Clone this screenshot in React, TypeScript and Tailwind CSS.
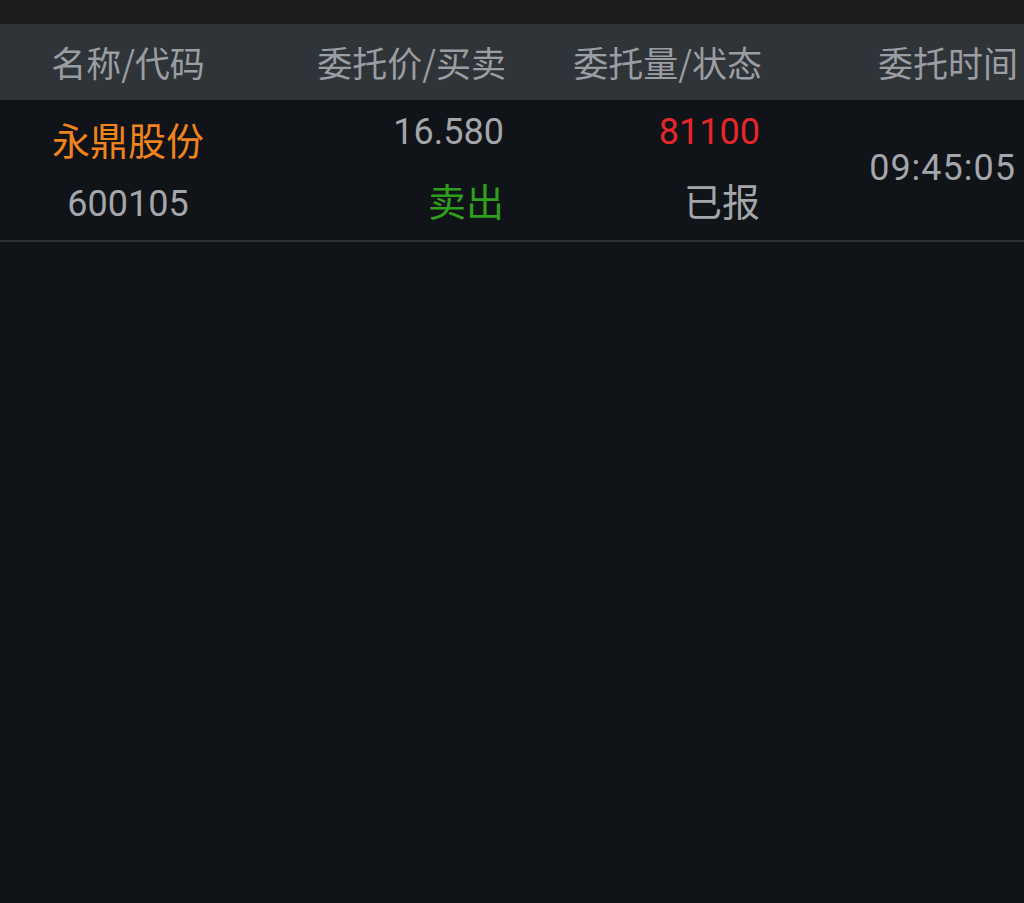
import * as React from "react";

type OrderRow = {
    name: string;
    code: string;
    price: string;
    side: string;
    volume: string;
    status: string;
    time: string;
};

const orders: OrderRow[] = [
    {
        name: "永鼎股份",
        code: "600105",
        price: "16.580",
        side: "卖出",
        volume: "81100",
        status: "已报",
        time: "09:45:05",
    },
];

const cjk = "font-['Noto_Sans_CJK_SC',_'Noto_Sans',_sans-serif]";
const num = "font-['Roboto',_'Noto_Sans_CJK_SC',_sans-serif]";

const RenderHeader = (): React.ReactElement => (
    <div className={`grid grid-cols-4 h-[76px] bg-[#2f3439] text-[35px] text-[#9a9da1] ${cjk}`}>
        <div className="flex items-center justify-center">名称/代码</div>
        <div className="flex items-center justify-end pr-[6px]">委托价/买卖</div>
        <div className="flex items-center justify-end pr-[6px]">委托量/状态</div>
        <div className="flex items-center justify-end pr-[6px]">委托时间</div>
    </div>
);

const RenderRow = (props: { row: OrderRow }): React.ReactElement => (
    <div className="grid grid-cols-4 h-[142px] border-b-2 border-[#2a2f34]">
        <div className="flex flex-col items-center pt-[19px] gap-[25px]">
            <span className={`h-[40px] leading-[40px] text-[38px] text-[#f0841c] ${cjk}`}>{props.row.name}</span>
            <span className={`h-[40px] leading-[40px] text-[36px] text-[#a3a6aa] ${num}`}>{props.row.code}</span>
        </div>
        <div className="flex flex-col items-end pr-[8px] pt-[12px] gap-[28px]">
            <span className={`h-[40px] leading-[40px] text-[36px] text-[#a3a6aa] ${num}`}>{props.row.price}</span>
            <span className={`h-[40px] leading-[40px] text-[38px] text-[#2f9e1c] ${cjk}`}>{props.row.side}</span>
        </div>
        <div className="flex flex-col items-end pr-[8px] pt-[12px] gap-[28px]">
            <span className={`h-[40px] leading-[40px] text-[36px] text-[#e5262a] ${num}`}>{props.row.volume}</span>
            <span className={`h-[40px] leading-[40px] text-[38px] text-[#a3a6aa] ${cjk}`}>{props.row.status}</span>
        </div>
        <div className="flex items-center justify-end pr-[8px] pb-[4px]">
            <span className={`text-[36px] tracking-[1px] text-[#a3a6aa] ${num}`}>{props.row.time}</span>
        </div>
    </div>
);

export default function App(): React.ReactElement {
    return (
        <div className="w-[1024px] h-[903px] bg-[#101318] flex flex-col">
            <div className="h-[24px] bg-[#1c1d1f]" />
            <RenderHeader />
            {orders.map((row: OrderRow) => (
                <RenderRow key={row.code} row={row} />
            ))}
        </div>
    );
}
